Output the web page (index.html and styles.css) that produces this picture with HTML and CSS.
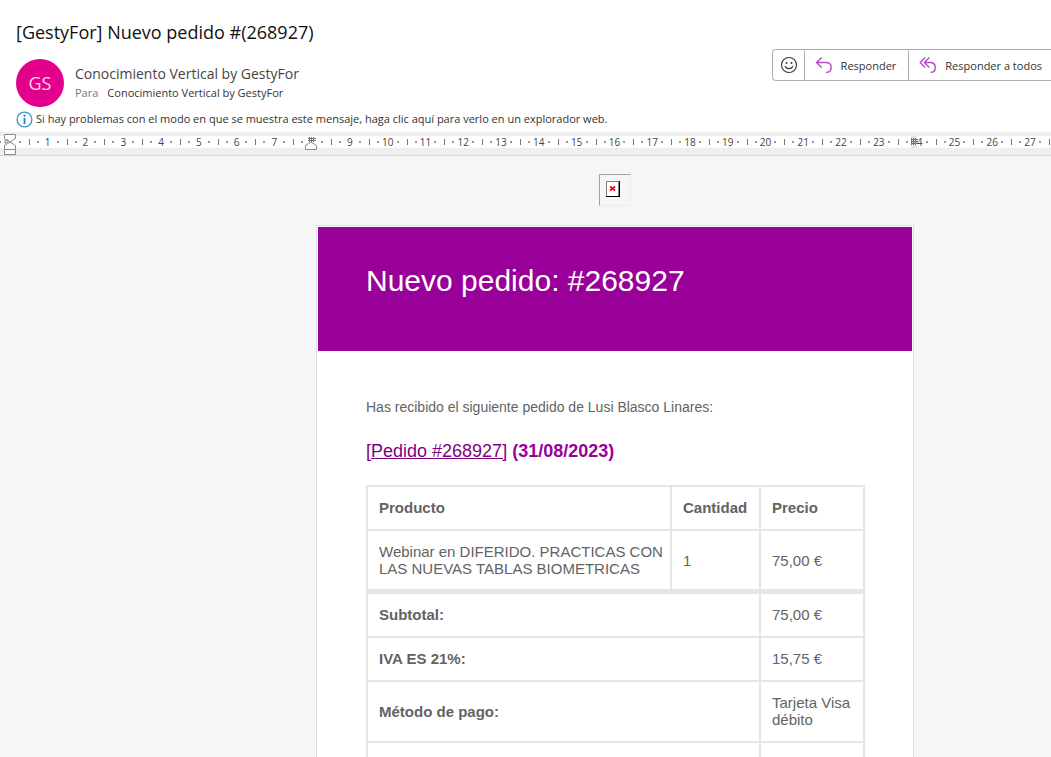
FILE: index.html
```html
<!DOCTYPE html>
<html lang="es">
<head>
<meta charset="utf-8">
<title>Nuevo pedido</title>
<link rel="stylesheet" href="styles.css">
</head>
<body>
<header class="head">
  <h1 class="subject">[GestyFor] Nuevo pedido #(268927)</h1>
  <div class="meta">
    <div class="avatar">GS</div>
    <div class="people">
      <div class="from">Conocimiento Vertical by GestyFor</div>
      <div class="to"><span class="to-label">Para</span><span>Conocimiento Vertical by GestyFor</span></div>
    </div>
    <div class="actions">
      <button class="action action-icon" type="button" aria-label="Reaccionar">
        <svg width="18" height="18" viewBox="0 0 18 18" fill="none" stroke="#3b3a39" stroke-width="1.2"><circle cx="9" cy="9" r="7.5"/><path d="M5.3 10.6c1.6 2.7 5.8 2.7 7.4 0" stroke-linecap="round"/><circle cx="6.5" cy="7" r="1" fill="#3b3a39" stroke="none"/><circle cx="11.5" cy="7" r="1" fill="#3b3a39" stroke="none"/></svg>
      </button>
      <button class="action" type="button">
        <svg width="18" height="18" viewBox="0 0 18 18" fill="none" stroke="#b14fc0" stroke-width="1.4"><path d="M6.7 1.5 1.5 6.5l5.2 5M1.5 6.5h9.3c3.4 0 5.4 2.2 5.4 5s-2 4.9-5.2 4.9"/></svg>
        <span>Responder</span>
      </button>
      <button class="action" type="button">
        <svg width="18" height="18" viewBox="0 0 18 18" fill="none" stroke="#b14fc0" stroke-width="1.4"><path d="M6.2 1.5 1.2 6.5l5 5M10.4 1.5l-5 5 5 5M5.4 6.5h5.8c3.3 0 5.1 2.2 5.1 5s-1.8 4.9-4.9 4.9"/></svg>
        <span>Responder a todos</span>
      </button>
    </div>
  </div>
  <div class="info">
    <svg width="17" height="17" viewBox="0 0 17 17"><circle cx="8.5" cy="8.5" r="7.4" fill="#fff" stroke="#3a96d0" stroke-width="1.3"/><path d="M8.5 7v6M8.5 3.7v2" stroke="#1e7fc0" stroke-width="1.8"/></svg>
    <span>Si hay problemas con el modo en que se muestra este mensaje, haga clic aquí para verlo en un explorador web.</span>
  </div>
</header>
<div class="ruler">
  <ol class="scale">
    <li></li><li>1</li><li>2</li><li>3</li><li>4</li><li>5</li><li>6</li><li>7</li><li></li><li>9</li><li>10</li><li>11</li><li>12</li><li>13</li><li>14</li><li>15</li><li>16</li><li>17</li><li>18</li><li>19</li><li>20</li><li>21</li><li>22</li><li>23</li><li>24</li><li>25</li><li>26</li><li>27</li><li></li>
  </ol>
  <svg class="marker indent" width="14" height="24" viewBox="0 0 14 24" fill="#fff" stroke="#8a8a8a"><path d="M1.5 2.5h11v4l-5.5 3.5-5.5-3.5zM1.5 17.5v-4l5.5-3.5 5.5 3.5v4zM1.5 17.5h11v5h-11z"/><path d="M1 8.5h5M1 10.5h5M2.5 7v5M4.5 7v5" stroke="#aaa"/></svg>
  <svg class="marker column" width="14" height="24" viewBox="0 0 14 24" fill="#fff" stroke="#8a8a8a"><path d="M1.5 17.5v-4l5.5-3.5 5.5 3.5v4z"/><path d="M4 6.5h8M4 8.5h8M5.5 5v5M7.5 5v5M9.5 5v5" stroke="#777"/></svg>
  <svg class="marker edge" width="14" height="24" viewBox="0 0 14 24" fill="none" stroke="#707070"><path d="M4 4h6v12H4z" fill="#e4e4e4" stroke="none"/><path d="M4 7.5h7M4 9.5h7M4 11.5h7M4.5 6v7M6.5 6v7M8.5 6v7"/></svg>
</div>
<main class="reading">
  <div class="missing">
    <svg width="16" height="17" viewBox="0 0 16 17"><path d="M1 0h14v16H1z" fill="#000"/><path d="M1 0h13v15H1z" fill="#808080"/><path d="M2 1h11v14H2z" fill="#fff"/><path d="m5 5.500 5 4m0-4-5 4" stroke="#f00" stroke-width="1.700"/></svg>
  </div>
  <article class="card">
    <h2 class="banner">Nuevo pedido: #268927</h2>
    <div class="content">
      <p class="intro">Has recibido el siguiente pedido de Lusi Blasco Linares:</p>
      <h3 class="order"><a class="order-link" href="#">[Pedido #268927]</a> (31/08/2023)</h3>
      <table class="items">
        <colgroup><col><col class="col-qty"><col class="col-price"></colgroup>
        <thead>
          <tr><th>Producto</th><th>Cantidad</th><th>Precio</th></tr>
        </thead>
        <tbody>
          <tr><td class="product">Webinar en DIFERIDO. PRACTICAS CON LAS NUEVAS TABLAS BIOMETRICAS</td><td>1</td><td>75,00 €</td></tr>
        </tbody>
        <tfoot>
          <tr class="first-total"><th colspan="2">Subtotal:</th><td>75,00 €</td></tr>
          <tr><th colspan="2">IVA ES 21%:</th><td>15,75 €</td></tr>
          <tr><th colspan="2">Método de pago:</th><td>Tarjeta Visa débito</td></tr>
          <tr><th colspan="2">&nbsp;</th><td>&nbsp;</td></tr>
        </tfoot>
      </table>
    </div>
  </article>
</main>
</body>
</html>
```
FILE: styles.css
```css
* { box-sizing: border-box; }
body {
  margin: 0;
  height: 100vh;
  display: flex;
  flex-direction: column;
  overflow: hidden;
  background: #fff;
  color: #333;
  font-family: "Open Sans", "Noto Sans", sans-serif;
  font-size: 11px;
}
h1, h2, h3, p, ol { margin: 0; padding: 0; font-weight: 400; }

.head { flex: none; padding: 19px 0 4px 16px; }
.subject { font-size: 18px; line-height: 26px; color: #111; }
.meta { display: flex; align-items: flex-start; margin-top: 4px; }
.avatar {
  width: 48px;
  height: 48px;
  margin-top: 10px;
  border-radius: 50%;
  background: #e3008c;
  color: #fbd5ec;
  font-size: 18px;
  line-height: 48px;
  text-align: center;
}
.people { margin: 15px 0 0 11px; }
.from { font-size: 14px; line-height: 20px; color: #444; }
.to { display: flex; gap: 9px; line-height: 18px; }
.to-label { color: #777; }
.actions {
  display: flex;
  height: 32px;
  margin-left: auto;
  border: 1px solid #b3b0ad;
  border-right: 0;
  border-radius: 4px 0 0 4px;
}
.action {
  display: flex;
  align-items: center;
  gap: 8px;
  padding: 0 12px 0 10px;
  border: 0;
  border-left: 1px solid #b3b0ad;
  background: none;
  color: #333;
  font: inherit;
}
.action:last-child { padding-right: 9px; }
.action-icon { padding: 0 6px 0 7px; border-left: 0; }
.info { display: flex; align-items: center; gap: 3px; margin-top: 3px; line-height: 18px; }

.ruler {
  position: relative;
  flex: none;
  height: 24px;
  padding-top: 4px;
  background: #efefef;
  border-bottom: 1px solid #d5d5d5;
  overflow: hidden;
}
.scale {
  display: flex;
  height: 12px;
  margin-left: -9px;
  background: #fff;
  list-style: none;
  font-size: 10px;
  line-height: 14px;
  color: #444;
}
.scale li {
  flex: none;
  display: flex;
  justify-content: space-between;
  align-items: center;
  width: 1cm;
  padding: 0 8px;
  background: linear-gradient(#777, #777) 0 50% / 1px 6px no-repeat;
}
.scale li::before,
.scale li::after { content: ""; width: 2px; height: 2px; background: #999; }
.marker { position: absolute; top: 0; }
.indent { left: 3px; }
.column { left: 304px; }
.edge { left: 907px; }

.reading {
  flex: 1;
  min-height: 0;
  overflow: hidden;
  display: flex;
  flex-direction: column;
  align-items: center;
  padding: 18px 0 0 179px;
  background: #f6f6f6;
  font-family: "Liberation Sans", Arial, sans-serif;
  color: #636363;
}
.missing {
  flex: none;
  width: 32px;
  height: 32px;
  padding: 6px 5px;
  border: 1px solid #ececec;
  border-top-color: #a0a0a0;
  border-left-color: #a0a0a0;
}
.missing svg { display: block; }
.card {
  flex: none;
  width: 598px;
  max-width: 100%;
  margin-top: 19px;
  padding: 1px;
  border: 1px solid #dedede;
  background: #fff;
}
.banner { padding: 36px 48px 52px; background: #990099; color: #fff; font-size: 30px; line-height: 36px; }
.content { padding: 48px 47px 64px 48px; }
.intro { font-size: 14px; line-height: 17px; }
.order { margin-top: 24px; font-size: 18px; line-height: 22px; font-weight: 700; color: #990099; }
.order-link { color: #800080; font-weight: 400; }
.items {
  width: 100%;
  margin-top: 23px;
  border-collapse: collapse;
  table-layout: fixed;
  font-size: 15px;
  line-height: 17px;
}
.items th, .items td { padding: 12px 11px 13px; border: 2px solid #e5e5e5; text-align: left; vertical-align: middle; }
.items tbody td { padding-bottom: 12px; }
.items .product { padding-right: 0; }
.items .first-total th, .items .first-total td { border-top-width: 5px; }
.col-qty { width: 89px; }
.col-price { width: 104px; }
```
